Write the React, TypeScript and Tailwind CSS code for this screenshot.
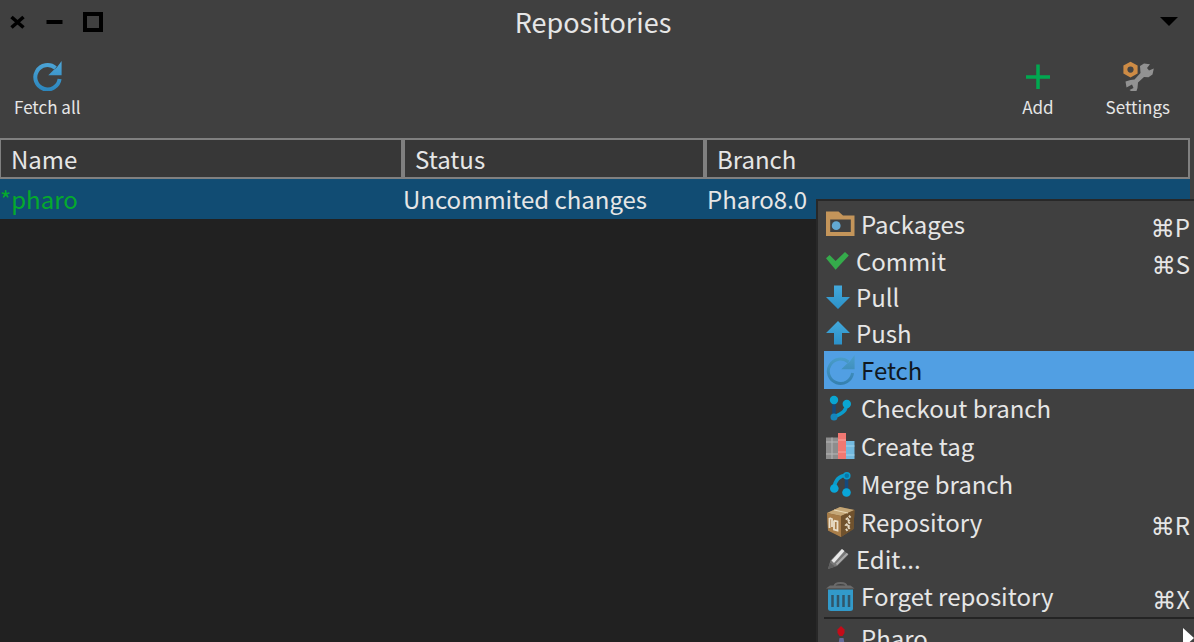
import type { ReactNode } from 'react';

function CloseIcon() {
  return (
    <svg width="18" height="16" viewBox="0 0 18 16" aria-hidden="true">
      <path d="M3.5 3 15.500 13.500M15.500 3 3.500 13.500" stroke="#000" strokeWidth="3.600" />
    </svg>
  );
}

function MinimizeIcon() {
  return (
    <svg width="17" height="16" viewBox="0 0 17 16" aria-hidden="true">
      <path d="M0.500 8H16.500" stroke="#000" strokeWidth="4" />
    </svg>
  );
}

function MaximizeIcon() {
  return (
    <svg width="20" height="20" viewBox="0 0 20 20" aria-hidden="true">
      <path d="M2 2H18V18H2Z" fill="none" stroke="#000" strokeWidth="4" />
    </svg>
  );
}

function RefreshIcon({ muted = false }: { muted?: boolean }) {
  const id = muted ? 'refresh-muted' : 'refresh-bright';
  return (
    <svg width="29" height="30" viewBox="0 0 29 30" className="shrink-0" aria-hidden="true">
      <defs>
        <linearGradient id={id} x1="0" y1="0" x2="0" y2="30" gradientUnits="userSpaceOnUse">
          <stop offset="0" stopColor={muted ? '#4b9fcb' : '#4ea6d8'} />
          <stop offset="1" stopColor={muted ? '#347fae' : '#2b86bd'} />
        </linearGradient>
      </defs>
      <path d="M22.5 7A12.2 12.2 0 1 0 26.6 18" fill="none" stroke={`url(#${id})`} strokeWidth={muted ? 3 : 4} />
      <path d="M28.6 0V14.2H15.3L20.4 9.2 24 6.2Z" fill={`url(#${id})`} />
    </svg>
  );
}

function AddIcon() {
  return (
    <svg width="26" height="30" viewBox="0 0 26 30" aria-hidden="true">
      <path d="M1 16H25M13 3.5V28" stroke="#00a850" strokeWidth="3.5" />
    </svg>
  );
}

function SettingsIcon() {
  return (
    <svg width="32" height="30" viewBox="0 0 32 30" aria-hidden="true">
      <path
        d="M18 5 22 2.500 28 3.200 25 7 27 9.500 31.800 7.500 30.500 13.500 26.500 16.300 22 16 16 21.500 15.500 27 14.500 30 9 30 7.500 29 11.500 27 10 23.500 4.500 26.500 3.500 20.500 8.500 19 12.500 18.500 18.500 12Z"
        fill="#929292"
      />
      <path d="M8.5.8 15.6 4.600V12.500L8.500 16.500 1.400 12.500V4.600Z" fill="#cd8b45" />
      <circle cx="8.5" cy="8.6" r="3.1" fill="#444" />
    </svg>
  );
}

function PackageIcon() {
  return (
    <svg width="29" height="26" viewBox="0 0 29 26" className="shrink-0" aria-hidden="true">
      <path d="M0 .5H12.5L17 4.500H28.5V25H0Z" fill="#c4955a" />
      <path d="M4.2 8.5H24.8V21H4.2Z" fill="#404040" />
      <circle cx="10.2" cy="14.7" r="4.4" fill="#62a8d2" />
    </svg>
  );
}

function CheckIcon() {
  return (
    <svg width="24" height="22" viewBox="0 0 24 22" className="shrink-0" aria-hidden="true">
      <path d="M0 8.2 3.6 5 9.6 11 19 2 22.8 5.5 9.6 19.8Z" fill="#35ab4b" />
    </svg>
  );
}

function ArrowIcon({ up = false }: { up?: boolean }) {
  return (
    <svg width="24" height="24" viewBox="0 0 24 24" className="shrink-0" aria-hidden="true">
      <defs>
        <linearGradient id={up ? 'arrow-up' : 'arrow-down'} x1="0" y1="0" x2="0" y2="1">
          <stop offset="0" stopColor="#43a9dc" />
          <stop offset="1" stopColor="#2c91c8" />
        </linearGradient>
      </defs>
      {up ? (
        <path d="M12 0 24 12H16V23.5H8V12H0Z" fill="url(#arrow-up)" />
      ) : (
        <path d="M8 .5H16V12H24L12 24 0 12H8Z" fill="url(#arrow-down)" />
      )}
    </svg>
  );
}

function BranchIcon() {
  return (
    <svg width="29" height="28" viewBox="0 0 29 28" className="shrink-0" aria-hidden="true">
      <path d="M8 6V21" stroke="#15497c" strokeWidth="3.5" />
      <path d="M20.500 9C21 16 17 19.500 8.500 22.500" fill="none" stroke="#0a9ccc" strokeWidth="3.5" />
      <circle cx="8" cy="6" r="4.200" fill="#0aa6d2" />
      <circle cx="20.800" cy="10" r="4.200" fill="#0aa6d2" />
      <circle cx="8" cy="23" r="3.500" fill="#1686bd" />
    </svg>
  );
}

function BooksIcon() {
  return (
    <svg width="29" height="28" viewBox="0 0 29 28" className="shrink-0" aria-hidden="true">
      <path d="M0 5.500H12V27H0Z" fill="#8d8d8d" />
      <path d="M6 5.500V27M0 10H12M0 22H12" stroke="#b6b6b6" strokeWidth="1" />
      <path d="M12 1H20V27H12Z" fill="#f07872" />
      <path d="M12 8H20M12 20H20" stroke="#f9a59f" strokeWidth="1" />
      <path d="M20 9H28.500V27H20Z" fill="#72b9df" />
      <path d="M20 14H28.500M20 23H28.500" stroke="#a2d3ec" strokeWidth="1" />
    </svg>
  );
}

function MergeIcon() {
  return (
    <svg width="29" height="28" viewBox="0 0 29 28" className="shrink-0" aria-hidden="true">
      <path d="M20.500 6V20" stroke="#15497c" strokeWidth="3.500" />
      <path d="M8 18C9 10 14 5.500 21 5" fill="none" stroke="#0a9ccc" strokeWidth="3.500" />
      <circle cx="20.800" cy="5.800" r="3" fill="#0876a6" stroke="#0a9ccc" strokeWidth="1.500" />
      <circle cx="8.300" cy="18.500" r="4.300" fill="#0aa6d8" />
      <circle cx="20.500" cy="22.500" r="4.300" fill="#0aa6d8" />
    </svg>
  );
}

function CrateIcon() {
  return (
    <svg width="29" height="30" viewBox="0 0 29 30" className="shrink-0" aria-hidden="true">
      <path d="M1 6 14 0 28.500 3 27.500 22 15 30 2 23.500Z" fill="#806036" />
      <path d="M1 6 14 0 28.500 3 15 9Z" fill="#c5a777" />
      <path d="M1 6 15 9V30L2 23.500Z" fill="#a87d49" />
      <path d="M15 9 28.500 3 27.500 22 15 30Z" fill="#70522d" />
      <path d="M3.500 11V21M3.500 11 6 12V20M8 13.500V22.500L11.500 23.500V14.500L8 13.500" fill="none" stroke="#eadfca" strokeWidth="1.800" />
      <path d="M24.500 9 21 12 24 15 20.500 18 24 20 20 23.500" fill="none" stroke="#e3d8c2" strokeWidth="2.500" strokeDasharray="2 1" />
      <path d="M8 3 22 6" stroke="#eadbb9" strokeWidth="1" />
    </svg>
  );
}

function PencilIcon() {
  return (
    <svg width="24" height="24" viewBox="0 0 24 24" className="shrink-0" aria-hidden="true">
      <path d="M2 22 4.500 13.500 15.500 2 22.500 7.500 11 19Z" fill="#777" />
      <path d="M5.500 13.500 16 2 18.500 4 8 16Z" fill="#e8e8e8" />
      <path d="M10.500 17.500 21.500 6.500" stroke="#a9a9a9" strokeWidth="2" />
      <path d="M2 22 4 15.500 9 19.500Z" fill="#606060" />
    </svg>
  );
}

function TrashIcon() {
  return (
    <svg width="29" height="30" viewBox="0 0 29 30" className="shrink-0" aria-hidden="true">
      <path d="M8.500 5C9 1 20 1 20.500 5" fill="none" stroke="#696969" strokeWidth="2" />
      <path d="M0 7.500 4 4.500H24.500L28.500 7.500Z" fill="#6b6b6b" />
      <path d="M2 8.500H27V27.500Q27 30 24 30H5Q2 30 2 27.500Z" fill="#329aca" />
      <path d="M6.500 14V26M12 14V26M17.500 14V26M23 14V26" stroke="#30566a" strokeWidth="2.500" />
    </svg>
  );
}

function LighthouseIcon() {
  return (
    <svg width="29" height="28" viewBox="0 0 29 28" className="shrink-0" aria-hidden="true">
      <path d="M15 2 18.500 5.500V9L16.500 12H13.500L11.500 9V5.500Z" fill="#c50b18" />
      <path d="M13.500 14H17.500L20 28H11Z" fill="#646a99" />
    </svg>
  );
}

type Entry = { label: string; icon: ReactNode; shortcut?: string; compact?: boolean; active?: boolean };

const entries: Entry[] = [
  { label: 'Packages', icon: <PackageIcon />, shortcut: 'P' },
  { label: 'Commit', icon: <CheckIcon />, shortcut: 'S', compact: true },
  { label: 'Pull', icon: <ArrowIcon />, compact: true },
  { label: 'Push', icon: <ArrowIcon up />, compact: true },
  { label: 'Fetch', icon: <RefreshIcon muted />, active: true },
  { label: 'Checkout branch', icon: <BranchIcon /> },
  { label: 'Create tag', icon: <BooksIcon /> },
  { label: 'Merge branch', icon: <MergeIcon /> },
  { label: 'Repository', icon: <CrateIcon />, shortcut: 'R' },
  { label: 'Edit...', icon: <PencilIcon />, compact: true },
  { label: 'Forget repository', icon: <TrashIcon />, shortcut: 'X' },
];

function MenuRow({ entry }: { entry: Entry }) {
  return (
    <button
      type="button"
      role="menuitem"
      className={`flex w-full items-center gap-1.5 pl-0.5 pr-1 text-left ${entry.compact ? 'h-9' : 'h-[38px]'} ${
        entry.active ? 'bg-[#519fe3] text-[#101820]' : ''
      }`}
    >
      {entry.icon}
      <span className="flex-1">{entry.label}</span>
      {entry.shortcut && (
        <span className="pt-2">
          <span className="font-['DejaVu_Sans',sans-serif]">⌘</span>
          {entry.shortcut}
        </span>
      )}
    </button>
  );
}

function ToolButton({ label, children }: { label: string; children: ReactNode }) {
  return (
    <button type="button" className="flex flex-col items-center gap-1 text-[17px] leading-6">
      {children}
      <span>{label}</span>
    </button>
  );
}

export default function App() {
  return (
    <div className="relative flex h-screen flex-col overflow-hidden bg-[#404040] font-['Noto_Sans_CJK_SC','DejaVu_Sans',sans-serif] text-[24px] leading-8 text-[#e6e6e6]">
      <header className="grid h-[43px] shrink-0 grid-cols-[1fr_auto_1fr] items-center px-2">
        <div className="flex items-center gap-5">
          <button type="button" aria-label="Close"><CloseIcon /></button>
          <button type="button" aria-label="Minimize"><MinimizeIcon /></button>
          <button type="button" aria-label="Maximize"><MaximizeIcon /></button>
        </div>
        <h1 className="pr-2 text-[27px]">Repositories</h1>
        <button type="button" aria-label="Window menu" className="justify-self-end pr-2">
          <svg width="18" height="9" viewBox="0 0 18 9" aria-hidden="true">
            <path d="M0 0H18L9 9Z" fill="#000" />
          </svg>
        </button>
      </header>

      <nav aria-label="Repository actions" className="flex h-[95px] shrink-0 items-start pl-3.5 pr-6 pt-[18px]">
        <ToolButton label="Fetch all"><RefreshIcon /></ToolButton>
        <div className="ml-auto flex gap-13">
          <ToolButton label="Add"><AddIcon /></ToolButton>
          <ToolButton label="Settings"><SettingsIcon /></ToolButton>
        </div>
      </nav>

      <main className="flex-1 pr-1">
        <div className="h-full bg-[#212121]">
          <table className="w-full table-fixed border-separate border-spacing-0 text-left">
            <thead>
              <tr className="h-[41px] bg-[#373737]">
                <th className="w-[403px] border-2 border-l border-[#808080] p-0 pl-2.5 font-normal">Name</th>
                <th className="w-[302px] border-2 border-[#808080] p-0 pl-2.5 font-normal">Status</th>
                <th className="border-2 border-[#808080] p-0 pl-2.5 font-normal">Branch</th>
              </tr>
            </thead>
            <tbody>
              <tr className="h-10 bg-[#114c73]">
                <td className="p-0 text-[#05aa2d]">*pharo</td>
                <td className="p-0">Uncommited changes</td>
                <td className="p-0 pl-0.5">Pharo8.0</td>
              </tr>
            </tbody>
          </table>
        </div>
      </main>

      <div role="menu" aria-label="Repository menu" className="absolute right-0 top-[199px] w-[378px] border-l-2 border-t-2 border-[#282828] bg-[#404040] pl-1.5 pt-1">
        {entries.map((entry) => (
          <MenuRow key={entry.label} entry={entry} />
        ))}
        <hr className="mt-0.5 border-t-2 border-[#242424]" />
        <button type="button" role="menuitem" className="flex h-[38px] w-full items-center gap-1.5 pl-0.5 text-left">
          <LighthouseIcon />
          <span className="flex-1">Pharo</span>
          <svg width="11" height="20" viewBox="0 0 11 20" aria-hidden="true">
            <path d="M0 0 11 10 0 20Z" fill="#fff" />
          </svg>
        </button>
      </div>
    </div>
  );
}
